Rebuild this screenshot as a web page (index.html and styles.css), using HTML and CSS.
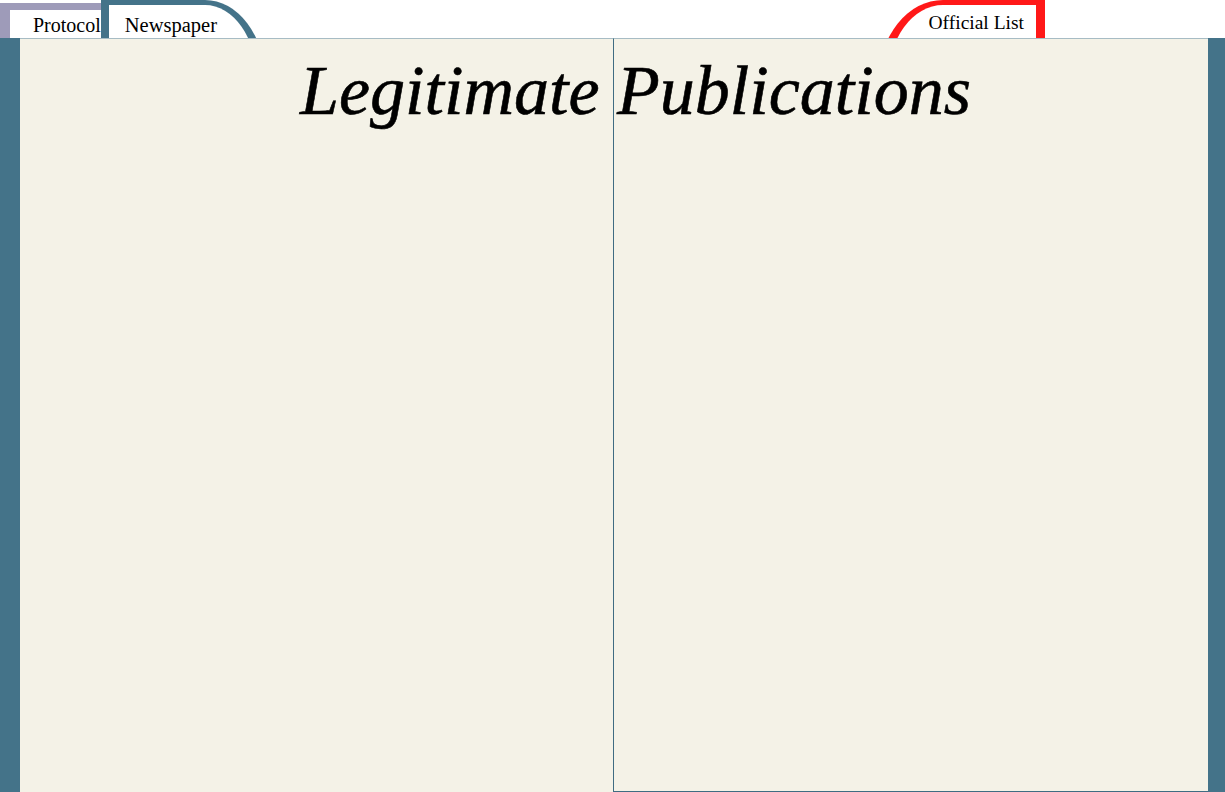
FILE: index.html
```html
<!DOCTYPE html>
<html lang="en">
<head>
<meta charset="utf-8">
<title>Legitimate Publications</title>
<link rel="stylesheet" href="styles.css">
</head>
<body>
<nav class="tabs">
  <div class="tab tab-protocol">Protocol</div>
  <div class="tab tab-newspaper">Newspaper</div>
  <div class="tab tab-official">Official List</div>
</nav>
<main class="book">
  <section class="page page-left"></section>
  <section class="page page-right"></section>
  <h1 class="title">Legitimate Publications</h1>
</main>
</body>
</html>
```

FILE: styles.css
```css
* { box-sizing: border-box; }
html, body { margin: 0; padding: 0; }
body {
  background: #ffffff;
  font-family: "Liberation Serif", "DejaVu Serif", serif;
  color: #000;
  overflow: hidden;
}
.tabs {
  display: flex;
  align-items: flex-start;
  height: 38px;
  overflow: hidden;
}
.tab {
  font-size: 20.5px;
  line-height: 24px;
  height: 80px;
  background: #ffffff;
  white-space: nowrap;
}
.tab-protocol {
  margin-top: 3px;
  border: 7px solid #9e9bb9;
  border-left-width: 10px;
  border-right-width: 8px;
  border-bottom: 0;
  border-top-right-radius: 20px;
  padding: 3px 12px 0 23px;
  font-size: 20px;
}
.tab-newspaper {
  position: relative;
  margin-left: -20px;
  border: 5px solid #447389;
  border-left-width: 8px;
  border-right-width: 8px;
  border-bottom: 0;
  border-top-right-radius: 60px 80px;
  padding: 8px 40px 0 16px;
}
.tab-official {
  margin-left: auto;
  margin-right: 180px;
  border: 5px solid #ff1818;
  border-left-width: 9px;
  border-right-width: 9px;
  border-bottom: 0;
  border-top-left-radius: 64px 80px;
  padding: 6px 12px 0 41px;
  font-size: 19.5px;
}
.book {
  position: relative;
  display: grid;
  grid-template-columns: 593px 1fr;
  height: calc(100vh - 38px);
  background: #447389;
  padding: 0 17px 0 20px;
}
.page {
  background: #f4f2e7;
  border-top: 1px solid #a7bcc4;
}
.page-right {
  border-left: 1px solid #3f6c82;
  border-bottom: 1px solid #3f6c82;
}
.title {
  position: absolute;
  top: 0;
  left: 0;
  right: 0;
  margin: 18px 0 0 0;
  padding-left: 46px;
  text-align: center;
  font-family: "Liberation Serif", serif;
  font-style: italic;
  font-weight: normal;
  font-size: 70px;
  line-height: 70px;
  -webkit-text-stroke: 0.6px #000;
}
```
